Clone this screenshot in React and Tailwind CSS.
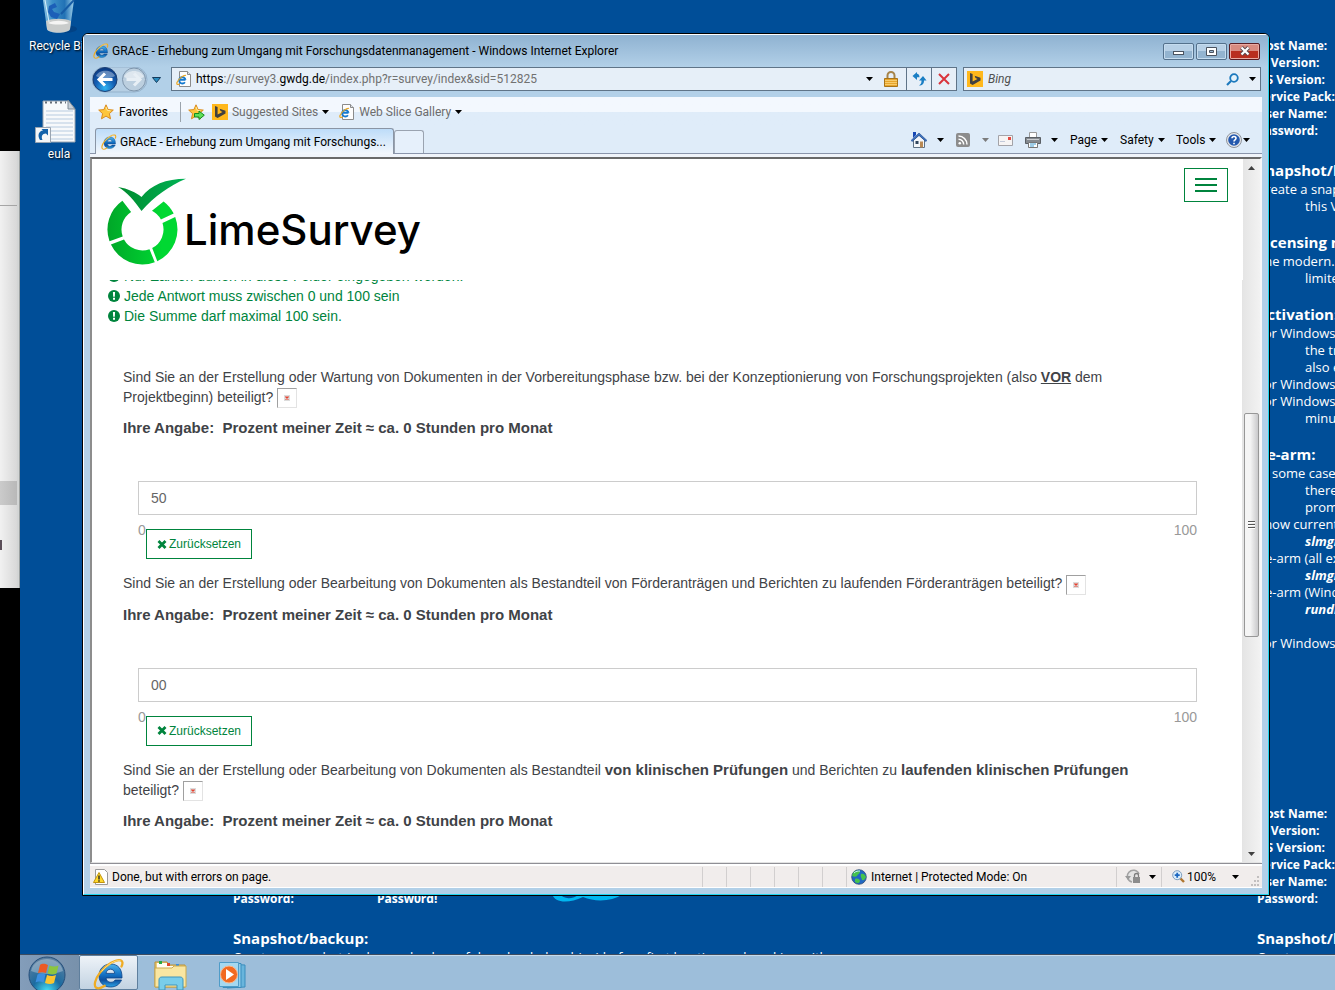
import React, { useState } from "react";

function Caret({ className = "text-black" }) {
  return (
    <svg width="7" height="4" viewBox="0 0 7 4" className={`shrink-0 ${className}`} aria-hidden="true">
      <path d="M0 0h7L3.500 4z" fill="currentColor" />
    </svg>
  );
}

function ExplorerLogo({ size = 16 }) {
  return (
    <svg width={size} height={size} viewBox="0 0 32 32" className="shrink-0" aria-hidden="true">
      <defs>
        <linearGradient id="ieBlue" x1="0" y1="0" x2="0" y2="1">
          <stop offset="0" stopColor="#4fb4ea" />
          <stop offset="0.45" stopColor="#1573c6" />
          <stop offset="0.7" stopColor="#0d4f9e" />
          <stop offset="1" stopColor="#2ba3e6" />
        </linearGradient>
      </defs>
      <path d="M29 20H13c.4 2.800 2.200 4.300 4.800 4.300 2 0 3.400-.8 4.300-2.300h6.400C26.500 26.500 22.800 29 17.600 29 10.500 29 6 24.500 6 17.800S10.700 6 17.600 6C25 6 29.300 11 29 20zM13 15.400h8.700c-.4-2.800-1.900-4.200-4.200-4.200s-4 1.400-4.500 4.200z" fill="url(#ieBlue)" stroke="#0b4387" strokeWidth="0.8" />
      <path d="M28.500 8.500c1.500-3.200 1.300-5.500-.8-6.200C23.300.8 13.500 6.500 7 14.600 1.700 21.400.6 27.800 3.200 29.800c1.900 1.300 5 .3 8.500-2" fill="none" stroke="#efac24" strokeWidth="2.300" strokeLinecap="round" />
      <path d="M27.500 2.800c-5-1.300-13 3.700-19 10.700" fill="none" stroke="#ffe28a" strokeWidth="0.900" />
    </svg>
  );
}

function PageLogo() {
  return (
    <svg width="16" height="16" viewBox="0 0 16 16" className="shrink-0" aria-hidden="true">
      <path d="M3.500.5h8l3 3v12h-11z" fill="#fdfdfd" stroke="#8b8b8b" />
      <path d="M11.500.5v3h3" fill="#dde3ea" stroke="#8b8b8b" />
      <path d="M9.500 8.800a3.200 3.200 0 1 0-.6 2.400M3.500 8.800h6" fill="none" stroke="#1479cf" strokeWidth="1.900" />
      <path d="M10 4.500C8 3.500 2.500 7.500 1 11.500c-.6 2 .5 2.500 2.500 1.500" fill="none" stroke="#e9a827" strokeWidth="1.200" />
    </svg>
  );
}

function BingLogo() {
  return (
    <svg width="16" height="16" viewBox="0 0 16 16" className="shrink-0" aria-hidden="true">
      <path d="M0 0h16v16H0z" fill="#ffb81c" />
      <path d="M3 2l2.600.9v7.600L10.500 8 8.500 7 7.600 4.700 13.500 6.800v2.800L5.600 14 3 12.500z" fill="#404040" />
    </svg>
  );
}

function Star({ add = false }) {
  return (
    <svg width="17" height="16" viewBox="0 0 17 16" className="shrink-0" aria-hidden="true">
      <path d="M8 .8l2.100 4.800 5.200.5-3.900 3.500 1.100 5.200L8 12.100l-4.500 2.700 1.100-5.200L.7 6.100l5.200-.5z" fill="#fdc63c" stroke="#d98b1e" />
      <path d="M8 3l1.300 3.400 3.200.4" fill="none" stroke="#ffeaa0" />
      {add && <path d="M6.500 9.500h4.500V7l5.300 4.200L11 15.500V13H6.500z" fill="#5fe05a" stroke="#148a1c" />}
    </svg>
  );
}

function RecycleBin() {
  return (
    <svg width="48" height="38" viewBox="0 0 48 38" aria-hidden="true">
      <defs>
        <linearGradient id="bin" x1="0" x2="1">
          <stop offset="0" stopColor="#8cc3e2" />
          <stop offset="0.3" stopColor="#3b8fc9" />
          <stop offset="0.7" stopColor="#2272b5" />
          <stop offset="1" stopColor="#9fd0ea" />
        </linearGradient>
      </defs>
      <ellipse cx="29" cy="29" rx="13" ry="4" fill="#043a78" opacity="0.6" />
      <path d="M8 0h31l-4 29c-1 5-22 5-23 0z" fill="url(#bin)" />
      <path d="M11 21c6-3 19-3 25 0l-1 8c-2 5-21 5-23 0z" fill="#c9cccb" />
      <path d="M13 23c6-3 15-3 21 0-5 2-16 2-21 0z" fill="#f5f5f4" />
      <path d="M14 6l6-3 2 4-5 2 2 3 6 2-3 5-6-2-3-5z" fill="#1c5fb8" />
      <path d="M39 0L26 14" stroke="#165ca6" strokeWidth="2" />
      <path d="M10 0l4 22" stroke="#d8f0fb" />
    </svg>
  );
}

function TextFile() {
  return (
    <svg width="48" height="47" viewBox="0 0 48 47" aria-hidden="true">
      <path d="M8 2h25l7 8v33H8z" fill="#f7f9fb" stroke="#9aa5b1" />
      <path d="M33 1v9h7z" fill="#c8d0d8" stroke="#7f8b97" />
      <path d="M10 3.500h21" stroke="#666f78" strokeWidth="2" strokeDasharray="2 3" />
      <path d="M11 12h27M11 16h27M11 20h27M11 24h27M11 28h27M11 32h27M11 36h27M11 40h27" stroke="#b7cbe0" />
      <path d="M.5 28.500h15v15H.5z" fill="#f4f6f8" stroke="#9aa5b1" />
      <path d="M5 41c-3-5-1-9 3-9.500L6.500 30H13v6.500l-2-2c-4 0-5 3-3.500 6.500z" fill="#1261a9" />
    </svg>
  );
}

const infoSheet = [
  { kind: "b", text: "Host Name:" },
  { kind: "b", text: "IE Version:" },
  { kind: "b", text: "OS Version:" },
  { kind: "b", text: "Service Pack:" },
  { kind: "b", text: "User Name:" },
  { kind: "b", text: "Password:" },
  { kind: "gap" },
  { kind: "h", text: "Snapshot/backup:" },
  { kind: "p", text: "Create a snapshot" },
  { kind: "i", text: "this VM" },
  { kind: "gap" },
  { kind: "h", text: "Licensing notes" },
  { kind: "p", text: "The modern.ie" },
  { kind: "i", text: "limited" },
  { kind: "gap" },
  { kind: "h", text: "Activation:" },
  { kind: "p", text: "For Windows 7" },
  { kind: "i", text: "the trial" },
  { kind: "i", text: "also enter" },
  { kind: "p", text: "For Windows 8" },
  { kind: "p", text: "For Windows 8" },
  { kind: "i", text: "minutes" },
  { kind: "gap" },
  { kind: "h", text: "Re-arm:" },
  { kind: "p", text: "In some cases" },
  { kind: "i", text: "there" },
  { kind: "i", text: "prompt" },
  { kind: "p", text: "Show current" },
  { kind: "c", text: "slmgr" },
  { kind: "p", text: "Re-arm (all except" },
  { kind: "c", text: "slmgr" },
  { kind: "p", text: "Re-arm (Windows" },
  { kind: "c", text: "rundll32" },
  { kind: "gap" },
  { kind: "p", text: "For Windows 8" },
];

const sheetStyles = {
  b: "h-[17px] text-[12px] leading-[17px] font-bold",
  h: "h-[21px] text-[15px] leading-[21px] font-bold",
  p: "h-[17px] text-[13px] leading-[17px]",
  i: "h-[17px] pl-12 text-[13px] leading-[17px]",
  c: "h-[17px] pl-12 text-[13px] leading-[17px] font-bold italic",
  gap: "h-[17px]",
};

function SheetRows({ rows }) {
  return rows.map((row, i) => (
    <div key={i} className={sheetStyles[row.kind]}>
      {row.text}
    </div>
  ));
}

function Wallpaper() {
  return (
    <div className="absolute inset-0 overflow-hidden font-['Open_Sans','Noto_Sans',sans-serif] whitespace-nowrap text-white">
      <div className="absolute top-[37px] right-0 bottom-0 flex w-[78px] flex-col justify-between overflow-hidden">
        <div>
          <SheetRows rows={infoSheet.slice(0, 6)} />
          <div className="h-1" />
          <SheetRows rows={infoSheet.slice(6)} />
        </div>
        <div className="-mb-3">
          <SheetRows rows={infoSheet.slice(0, 6)} />
          <div className="h-1" />
          <SheetRows rows={infoSheet.slice(6, 9)} />
        </div>
      </div>
      <div className="absolute -bottom-3 left-[213px] w-[640px]">
        <div className="flex text-[12px] leading-[17px] font-bold">
          <span className="w-36">Password:</span>
          <span>Passw0rd!</span>
        </div>
        <div className="h-[21px]" />
        <div className="text-[15px] leading-[21px] font-bold">Snapshot/backup:</div>
        <div className="text-[13px] leading-[17px]">
          Create a snapshot (or keep a backup of downloaded archive) before first booting and working with
        </div>
      </div>
      <svg width="74" height="12" viewBox="0 0 74 12" className="absolute bottom-[48px] left-[532px]" aria-hidden="true">
        <path d="M0 0c3 9 16 10 31 3 12 5 28 5 40-3z" fill="#00b7f1" />
        <path d="M8 0c3 5 12 6 20 0z" fill="#004e98" />
      </svg>
    </div>
  );
}

function TitleBar() {
  const base = "flex h-[17px] items-center justify-center rounded-[2px] border border-[#54718c] shadow-[inset_0_0_0_1px_#c5dcef]";
  return (
    <div className="flex h-8 items-center bg-gradient-to-b from-[#8fb2d1] to-[#b2d0e8] pr-2 pl-[9px] text-[12px]">
      <ExplorerLogo />
      <span className="ml-[3px] flex-1 truncate leading-4">
        GRAcE - Erhebung zum Umgang mit Forschungsdatenmanagement - Windows Internet Explorer
      </span>
      <div className="flex gap-[2px]">
        <button aria-label="Minimize" className={`${base} w-[31px] bg-gradient-to-b from-[#b7d0e6] from-50% to-[#93b4d0] to-50%`}>
          <span className="mt-1 h-1 w-[11px] border border-[#4a5360] bg-white" />
        </button>
        <button aria-label="Maximize" className={`${base} w-[31px] bg-gradient-to-b from-[#b7d0e6] from-50% to-[#93b4d0] to-50%`}>
          <svg width="11" height="9" viewBox="0 0 11 9" aria-hidden="true">
            <path d="M.5.5h10v8H.5z" fill="#fff" stroke="#4a5360" />
            <path d="M3.500 3.500h4v2h-4z" fill="#9bb8d2" stroke="#4a5360" />
          </svg>
        </button>
        <button aria-label="Close window" className="flex h-[17px] w-[31px] items-center justify-center rounded-[2px] border border-[#5a1d23] bg-gradient-to-b from-[#d98b80] from-50% to-[#b92e1f] to-50% shadow-[inset_0_0_0_1px_#e9aaa2]">
          <svg width="12" height="10" viewBox="0 0 12 10" aria-hidden="true">
            <path d="M2.500 1.500l7 7m0-7l-7 7" stroke="#5b4a50" strokeWidth="4" />
            <path d="M2.500 1.500l7 7m0-7l-7 7" stroke="#fff" strokeWidth="2.200" />
          </svg>
        </button>
      </div>
    </div>
  );
}

function AddressRow() {
  return (
    <div className="flex h-[30px] items-start pr-[7px] pl-2 text-[12px]">
      <svg width="56" height="26" viewBox="0 0 56 26" className="shrink-0" aria-hidden="true">
        <defs>
          <radialGradient id="back" cx="0.5" cy="0.85" r="0.8">
            <stop offset="0" stopColor="#32b5f3" />
            <stop offset="0.5" stopColor="#1560b4" />
            <stop offset="1" stopColor="#0c3c85" />
          </radialGradient>
        </defs>
        <rect x="0" y="0" width="55" height="25" rx="12.500" fill="#b6cfe4" stroke="#94b1cb" />
        <circle cx="13" cy="12.500" r="12" fill="url(#back)" stroke="#1b3f74" />
        <path d="M4 9c3-7 16-7 19 0-5 3-14 3-19 0z" fill="#fff" opacity="0.35" />
        <path d="M20.500 12.500H8M13 6.500l-6 6 6 6" fill="none" stroke="#fff" strokeWidth="3" />
        <circle cx="42" cy="12.500" r="11.500" fill="#bccfdf" stroke="#7e95ac" />
        <path d="M32 10c3-8 17-8 20 0-6 3-14 3-20 0z" fill="#fff" opacity="0.5" />
        <path d="M34.500 12.500h13M42 6.500l6 6-6 6" fill="none" stroke="#e8eff5" strokeWidth="3" />
      </svg>
      <button aria-label="Recent pages" className="mt-[10px] ml-1 shrink-0">
        <svg width="9" height="6" viewBox="0 0 9 6" aria-hidden="true">
          <path d="M.5.5h8l-4 5z" fill="#2a8dc0" stroke="#153b5d" />
        </svg>
      </button>
      <div className="ml-[10px] flex h-6 min-w-0 flex-1 items-center border border-[#5f7488] bg-[#e6eff8]">
        <div className="ml-1"><PageLogo /></div>
        <div className="relative ml-1 flex h-full min-w-0 flex-1 items-center text-[#717171]">
          <input className="absolute inset-0 w-full bg-transparent outline-none" aria-label="Address" />
          <span className="pointer-events-none truncate">
            <span className="text-black">https</span>://survey3.<span className="text-black">gwdg.de</span>/index.php?r=survey/index&amp;sid=512825
          </span>
        </div>
        <button aria-label="Address history" className="flex w-[18px] items-center"><Caret /></button>
        <svg width="14" height="16" viewBox="0 0 14 16" className="mr-2 shrink-0" aria-hidden="true">
          <path d="M3.500 8V4.500a3.500 3.500 0 0 1 7 0V8" fill="none" stroke="#a6844a" strokeWidth="2" />
          <path d="M.5 7.500h13v8H.5z" fill="#e8a52b" stroke="#a8741a" />
          <path d="M1 9.500h12M1 11.500h12M1 13.500h12" stroke="#f7cc6d" />
        </svg>
        <button aria-label="Refresh" className="flex h-full w-[25px] items-center justify-center border-l border-[#5f7488]">
          <svg width="15" height="14" viewBox="0 0 15 14" aria-hidden="true">
            <path d="M5 0L.5 4 5 8V5.200h2.500C7.500 3 6.500 1.800 5 1.800z" fill="#1b7fc4" />
            <path d="M7 8.500h2.500c0 2.500-.5 3.500-2.500 5 3.500 0 5-1.500 5-5h2.500L11 4z" fill="#1b7fc4" />
          </svg>
        </button>
        <button aria-label="Stop" className="flex h-full w-[25px] items-center justify-center border-l border-[#5f7488]">
          <svg width="12" height="12" viewBox="0 0 12 12" aria-hidden="true">
            <path d="M1 1l10 10M11 1L1 11" stroke="#d9343c" strokeWidth="2" />
          </svg>
        </button>
      </div>
      <div className="ml-[6px] flex h-6 w-[298px] items-center border border-[#5f7488] bg-[#e6eff8] pl-[3px]">
        <BingLogo />
        <input aria-label="Search with Bing" placeholder="Bing" className="ml-[5px] min-w-0 flex-1 bg-transparent italic outline-none placeholder:text-[#4f4f4f]" />
        <button aria-label="Search" className="mr-[10px]">
          <svg width="13" height="13" viewBox="0 0 13 13" aria-hidden="true">
            <circle cx="8" cy="5" r="3.800" fill="#e4f2fb" stroke="#1c79bd" strokeWidth="1.800" />
            <path d="M5 8l-4 4" stroke="#1c79bd" strokeWidth="2.200" />
          </svg>
        </button>
        <button aria-label="Search options" className="mr-1"><Caret /></button>
      </div>
    </div>
  );
}

function FavoritesBar() {
  return (
    <div className="flex h-[30px] items-center bg-gradient-to-b from-[#f3f8fe] from-50% to-[#dfecf9] to-50% pl-2 text-[12px]">
      <button className="flex items-center gap-1"><Star />Favorites</button>
      <span className="mr-[7px] ml-3 h-5 w-px bg-[#9aa3ac]" />
      <button aria-label="Add to Favorites bar"><Star add /></button>
      <button className="ml-[7px] flex items-center gap-1 text-[#6d6d6d]"><BingLogo />Suggested Sites<Caret /></button>
      <button className="ml-[10px] flex items-center gap-1 text-[#6d6d6d]"><PageLogo />Web Slice Gallery<Caret /></button>
    </div>
  );
}

function CommandBar() {
  return (
    <div className="flex items-center pr-3 text-[12px]">
      <button aria-label="Home" className="flex w-[45px] items-center gap-[10px]">
        <svg width="16" height="16" viewBox="0 0 16 16" aria-hidden="true">
          <path d="M2.500 8v7.500h11V8L8 3z" fill="#f4f7fa" stroke="#5e7184" />
          <path d="M0 8.500L8 1l8 7.500-1 1L8 3.500 1 9.500z" fill="#3f74bf" stroke="#1d448c" strokeWidth="0.6" />
          <path d="M2 0h3v3L2 6z" fill="#1647b4" />
          <path d="M9 9.500h3v6H9z" fill="#b98a55" /><path d="M4.500 9h3v3h-3z" fill="#32475e" />
        </svg>
        <Caret />
      </button>
      <button aria-label="Feeds" className="flex w-[42px] items-center gap-3">
        <svg width="14" height="14" viewBox="0 0 14 14" aria-hidden="true">
          <rect width="14" height="14" rx="2" fill="#8c8c8c" />
          <circle cx="3.800" cy="10.200" r="1.300" fill="#fff" />
          <path d="M2.500 6.300a5.200 5.200 0 0 1 5.200 5.200M2.500 3a8.500 8.500 0 0 1 8.500 8.500" fill="none" stroke="#fff" strokeWidth="1.500" />
        </svg>
        <Caret className="text-[#7c7c7c]" />
      </button>
      <button aria-label="Read mail" className="w-[27px]">
        <svg width="15" height="11" viewBox="0 0 15 11" aria-hidden="true">
          <path d="M.5.5h14v10H.5z" fill="#f6f4f4" stroke="#a3a3a8" />
          <path d="M10 2h3v3h-3z" fill="#e44b43" /><path d="M2 6.500h5" stroke="#c2cada" />
        </svg>
      </button>
      <button aria-label="Print" className="flex w-[45px] items-center gap-[10px]">
        <svg width="16" height="16" viewBox="0 0 16 16" aria-hidden="true">
          <path d="M4.500.5h7v5h-7z" fill="#fff" stroke="#999" />
          <path d="M.5 5.500h15v6H.5z" fill="#858a90" stroke="#5b6066" />
          <path d="M2 7.500h12" stroke="#c9cdd1" />
          <path d="M3.500 10.500h9v5h-9z" fill="#fff" stroke="#777" /><path d="M5 12h6M5 14h4" stroke="#3f9bd0" />
        </svg>
        <Caret />
      </button>
      <button className="flex w-[50px] items-center gap-1">Page<Caret /></button>
      <button className="flex w-14 items-center gap-1">Safety<Caret /></button>
      <button className="flex w-[50px] items-center gap-1">Tools<Caret /></button>
      <button aria-label="Help" className="flex w-6 items-center gap-px">
        <svg width="16" height="16" viewBox="0 0 16 16" aria-hidden="true">
          <circle cx="8" cy="8" r="7.500" fill="#e4e6ea" stroke="#8f949c" />
          <circle cx="8" cy="8" r="5.800" fill="#2459ae" />
          <path d="M6 6.300c0-2.500 4-2.500 4 0 0 1.500-2 1.500-2 3.200M8 10.800v1.500" fill="none" stroke="#fff" strokeWidth="1.600" />
        </svg>
        <Caret />
      </button>
    </div>
  );
}

function TabRow() {
  return (
    <div className="flex h-[27px] items-stretch border-b border-[#8a95ab] bg-[#dfecf9] pl-[5px] text-[12px]">
      <button className="mt-px -mb-px flex w-[299px] items-center gap-[3px] rounded-t-[3px] border border-b-0 border-[#8a95a5] bg-gradient-to-b from-[#bddcf9] to-[#f3f7fc] pl-[5px]">
        <ExplorerLogo />
        <span className="truncate leading-4">GRAcE - Erhebung zum Umgang mit Forschungs...</span>
      </button>
      <button aria-label="New tab" className="mt-[3px] w-[30px] rounded-t-[3px] border border-b-0 border-[#9aa3b0] bg-[#e6f0fb]" />
      <div className="flex-1" />
      <CommandBar />
    </div>
  );
}

function LimeLogo() {
  return (
    <a href="#start" className="flex items-center text-black no-underline">
      <svg width="80" height="88" viewBox="0 0 80 88" aria-hidden="true">
        <defs>
          <linearGradient id="lime" gradientUnits="userSpaceOnUse" x1="1" y1="0" x2="70" y2="0">
            <stop offset="0" stopColor="#00a628" />
            <stop offset="0.8" stopColor="#00d832" />
          </linearGradient>
          <linearGradient id="tick" x1="0" x2="1">
            <stop offset="0" stopColor="#008a2e" />
            <stop offset="1" stopColor="#00b355" />
          </linearGradient>
        </defs>
        <g fill="url(#lime)">
          <path d="M16.400 22.800A35 35 0 0 0 3.500 63.200L16.700 58.500A21 21 0 0 1 25.100 33.900Z" />
          <path d="M4.900 66.600A35 35 0 0 0 48.800 84.300L43.500 71.300A21 21 0 0 1 18 61.500Z" />
          <path d="M51.300 83.200A35 35 0 0 0 69.200 39L56.500 45A21 21 0 0 1 46.200 70.100Z" />
          <path d="M67.700 35.600A35 35 0 0 0 57.600 23.500L46 32.800A21 21 0 0 1 54.900 41.500Z" />
        </g>
        <path d="M12 9C22 10.500 30 14.500 35.500 19 45 7 60 .8 80 .8 63 8 49 18 35.500 33 29 23.500 21 14 12 9Z" fill="url(#tick)" />
      </svg>
      <span className="-ml-[2px] pt-[15px] font-['Inter',sans-serif] text-[42px] leading-[56px] font-medium">LimeSurvey</span>
    </a>
  );
}

function Hint({ children }) {
  return (
    <li className="flex h-5 items-center gap-1">
      <svg width="12" height="12" viewBox="0 0 12 12" className="shrink-0" aria-hidden="true">
        <circle cx="6" cy="6" r="6" fill="#00843d" />
        <path d="M4.900 2h2.200l-.3 4.800H5.200zM5 7.800h2v2H5z" fill="#fff" />
      </svg>
      {children}
    </li>
  );
}

function BrokenImage() {
  return (
    <span role="img" aria-label="Missing picture" className="inline-flex h-5 w-5 items-center justify-center border border-t-[#a0a0a0] border-r-[#e3e3e3] border-b-[#e3e3e3] border-l-[#a0a0a0] align-middle">
      <svg width="6" height="6" viewBox="0 0 6 6" aria-hidden="true">
        <path d="M0 0h6v6H0z" fill="#dcdcdc" />
        <path d="M1.500 1.500l3 3m0-3l-3 3" stroke="#e8412e" strokeWidth="1.400" />
      </svg>
    </span>
  );
}

function Question({ id, initial, children }) {
  const [value, setValue] = useState(initial);
  return (
    <section>
      <label htmlFor={id} className="block">
        <span className="block">{children}</span>
        <span className="mt-[10px] block text-[15px] font-bold">
          Ihre Angabe:&nbsp; Prozent meiner Zeit ≈ ca. 0 Stunden pro Monat
        </span>
      </label>
      <div className="mt-[43px] px-[15px]">
        <input
          id={id}
          value={value}
          onChange={(e) => setValue(e.target.value)}
          className="block h-[34px] w-full border border-[#cccccc] bg-white px-3 text-[14px] text-[#666666] outline-none focus:border-[#00843d]"
        />
        <div className="mt-[5px] flex h-[9px] justify-between leading-5 text-[#999999]">
          <span>0</span>
          <span>100</span>
        </div>
        <button
          type="button"
          onClick={() => setValue("")}
          className="relative ml-2 flex h-[30px] items-center gap-[2px] border border-[#00843d] bg-white px-[10px] text-[12px] text-[#00843d]"
        >
          <svg width="10" height="9" viewBox="0 0 10 9" aria-hidden="true">
            <path d="M1.500 1l7 7m0-7l-7 7" stroke="currentColor" strokeWidth="2.800" />
          </svg>
          Zurücksetzen
        </button>
      </div>
    </section>
  );
}

function SurveyPage() {
  return (
    <main className="flex min-w-0 flex-1 flex-col overflow-hidden bg-white font-['Liberation_Sans',Arial,sans-serif] text-[14px] leading-5 text-[#3f4347]">
      <header className="relative z-10 flex h-[121px] shrink-0 items-start justify-between bg-white pt-[9px] pr-[15px] pl-[14px]">
        <div className="pt-[10px]"><LimeLogo /></div>
        <button aria-label="Menu" className="flex h-[34px] w-11 flex-col items-center justify-center gap-1 border border-[#00843d]">
          <span className="h-[2px] w-[22px] bg-[#00843d]" />
          <span className="h-[2px] w-[22px] bg-[#00843d]" />
          <span className="h-[2px] w-[22px] bg-[#00843d]" />
        </button>
      </header>
      <div className="min-h-0 flex-1 overflow-hidden border-r border-[#e4e4e4]">
        <ul className="-mt-[14px] pl-4 text-[#00843d]">
          <Hint>Nur Zahlen dürfen in diese Felder eingegeben werden.</Hint>
          <Hint>Jede Antwort muss zwischen 0 und 100 sein</Hint>
          <Hint>Die Summe darf maximal 100 sein.</Hint>
        </ul>
        <form className="flex flex-col gap-[14px] pt-[41px] pr-[30px] pl-[31px]">
          <Question id="preparation" initial="50">
            Sind Sie an der Erstellung oder Wartung von Dokumenten in der Vorbereitungsphase bzw. bei der Konzeptionierung von Forschungsprojekten (also{" "}
            <b className="underline">VOR</b> dem{" "}
            <span className="whitespace-nowrap">Projektbeginn) beteiligt? <BrokenImage /></span>
          </Question>
          <Question id="proposals" initial="00">
            Sind Sie an der Erstellung oder Bearbeitung von Dokumenten als Bestandteil von Förderanträgen und Berichten zu laufenden Förderanträgen beteiligt?{" "}
            <BrokenImage />
          </Question>
          <Question id="trials" initial="">
            Sind Sie an der Erstellung oder Bearbeitung von Dokumenten als Bestandteil{" "}
            <b className="text-[15px]">von klinischen Prüfungen</b> und Berichten zu{" "}
            <b className="text-[15px]">laufenden klinischen Prüfungen</b>
            <br />
            beteiligt? <BrokenImage />
          </Question>
        </form>
      </div>
    </main>
  );
}

function ScrollBar() {
  return (
    <div className="flex w-[17px] shrink-0 flex-col items-center bg-gradient-to-r from-[#e5e5e5] to-[#f2f2f2]">
      <button aria-label="Scroll up" className="flex h-[17px] w-full items-center justify-center">
        <svg width="7" height="4" viewBox="0 0 7 4" aria-hidden="true"><path d="M0 4h7L3.500 0z" fill="#404040" /></svg>
      </button>
      <div className="flex w-full flex-1 flex-col items-center">
        <div className="flex-[238]" />
        <div className="flex w-[15px] flex-[223] flex-col items-center justify-center gap-px rounded-[2px] border border-[#979797] bg-gradient-to-r from-[#f5f5f5] from-40% to-[#c9c9cb]">
          <span className="h-[2px] w-[7px] border-t border-[#555] bg-white" />
          <span className="h-[2px] w-[7px] border-t border-[#555] bg-white" />
          <span className="h-[2px] w-[7px] border-t border-[#555] bg-white" />
        </div>
        <div className="flex-[209]" />
      </div>
      <button aria-label="Scroll down" className="flex h-[17px] w-full items-center justify-center">
        <Caret className="text-[#404040]" />
      </button>
    </div>
  );
}

function StatusBar() {
  const cell = "h-5 border-l border-[#d2cfcf]";
  return (
    <footer className="flex h-[22px] items-center border-b border-white bg-[#f1edec] text-[12px]">
      <div className="flex min-w-0 flex-1 items-center gap-[3px] pl-[3px]">
        <svg width="16" height="16" viewBox="0 0 16 16" className="shrink-0" aria-hidden="true">
          <path d="M2.500.5h9l3 3v12h-12z" fill="#fff" stroke="#9a9a9a" />
          <path d="M6 3.500l5.500 10H.5z" fill="#ffd92e" stroke="#c29410" />
          <path d="M6 6.500v4M6 11.300v1.400" stroke="#222" strokeWidth="1.400" />
        </svg>
        <span className="truncate">Done, but with errors on page.</span>
      </div>
      {[0, 1, 2, 3, 4, 5].map((n) => (
        <span key={n} className={`${cell} w-6`} />
      ))}
      <div className={`${cell} flex w-[270px] items-center gap-1 pl-1`}>
        <svg width="16" height="16" viewBox="0 0 16 16" className="shrink-0" aria-hidden="true">
          <circle cx="8" cy="8" r="7.300" fill="#2066c4" stroke="#2f4f74" strokeWidth="0.800" />
          <path d="M2 4c2-3 5-3 7-2 0 3-2 3-3 5-1 1-3 1-5 0zM10 5c3-1 4 1 5 3-1 2-2 4-4 3 0-2-2-3-1-6zM4 10c2-1 5 0 5 2-1 3-3 2-5 1z" fill="#45c34c" />
          <path d="M3 4c2-2 4-2 6-2" stroke="#c8f0ff" fill="none" />
        </svg>
        Internet | Protected Mode: On
      </div>
      <button aria-label="Privacy settings" className={`${cell} flex w-[45px] items-center gap-2 pl-2`}>
        <svg width="16" height="15" viewBox="0 0 16 15" className="shrink-0" aria-hidden="true">
          <path d="M14 5A6 6 0 1 0 7 13" fill="#e3e3e3" stroke="#a2a2a2" strokeWidth="1.500" />
          <path d="M0 7h6L3 11z" fill="#9a9a9a" />
          <path d="M9.500 8V6.500a2 2 0 0 1 4 0V8" fill="none" stroke="#7d7d7d" strokeWidth="1.300" />
          <path d="M8 8h7v6H8z" fill="#8c8c8c" />
        </svg>
        <Caret />
      </button>
      <div className={`${cell} flex w-[101px] items-center pl-[10px]`}>
        <button className="flex items-center gap-[2px]">
          <svg width="13" height="13" viewBox="0 0 13 13" aria-hidden="true">
            <path d="M8 8l4 4" stroke="#b0762f" strokeWidth="2.400" />
            <circle cx="5.200" cy="5.200" r="4.500" fill="#dceefb" stroke="#7d9dbd" />
            <path d="M5.200 2.700v5M2.700 5.200h5" stroke="#1b66c0" strokeWidth="1.800" />
          </svg>
          100%
        </button>
        <button aria-label="Zoom levels" className="ml-4"><Caret /></button>
        <svg width="10" height="10" viewBox="0 0 10 10" className="mt-2 mr-[2px] ml-auto" aria-hidden="true">
          <path d="M7 0h2v2H7zM4 4h2v2H4zM7 4h2v2H7zM1 8h2v2H1zM4 8h2v2H4zM7 8h2v2H7z" fill="#c2bfbf" />
        </svg>
      </div>
    </footer>
  );
}

function BrowserWindow() {
  return (
    <div className="absolute top-[33px] right-[65px] bottom-[58px] left-[62px] flex flex-col overflow-hidden rounded-t-[6px] border border-black bg-[#b2d0e8]">
      <div className="flex min-h-0 flex-1 flex-col border-t border-r border-b border-l border-t-white border-r-[#23d5f0] border-b-[#23d5f0] border-l-white">
        <TitleBar />
        <AddressRow />
        <div className="mx-[6px] mb-[6px] flex min-h-0 flex-1 flex-col">
          <FavoritesBar />
          <TabRow />
          <div className="h-[3px] bg-[#f0f4fa]" />
          <div className="flex min-h-0 flex-1 border-t-2 border-r-2 border-b border-l-2 border-t-[#696969] border-r-[#f7f7f7] border-b-[#e3e3e3] border-l-[#8d8d8d]">
            <SurveyPage />
            <ScrollBar />
          </div>
          <div className="h-[3px] border-t border-[#8f8f95] bg-white" />
          <StatusBar />
        </div>
      </div>
    </div>
  );
}

function TaskBar() {
  return (
    <nav className="flex h-9 shrink-0 overflow-hidden border-t border-[#3d4c60] bg-[#9dbeda] shadow-[inset_0_1px_0_#c6dbec]">
      <button aria-label="Start" className="flex w-[59px] items-start bg-gradient-to-r from-[#839dba] to-[#7891ab] pt-px pl-2">
        <svg width="38" height="38" viewBox="0 0 38 38" aria-hidden="true">
          <defs>
            <radialGradient id="orb" cx="0.5" cy="0.95" r="0.9">
              <stop offset="0" stopColor="#45e1f8" />
              <stop offset="0.45" stopColor="#1c6ba0" />
              <stop offset="1" stopColor="#5c7f9f" />
            </radialGradient>
          </defs>
          <circle cx="19" cy="19" r="18" fill="url(#orb)" stroke="#264f7b" />
          <path d="M3 15C6-1 32-1 35 15c-9 4-23 4-32 0z" fill="#fff" opacity="0.3" />
          <path d="M12 9c3-2 5-1 8 0l-2 8c-3-1-5-1-8 0z" fill="#ec5a24" />
          <path d="M21.500 9.500c3 1 5 1.500 9 0l-2 8c-3 1.500-6 1-9 0z" fill="#8cc63e" />
          <path d="M9.500 18.500c3-1.500 5-1 8 0l-2 8c-3-1-5-1.500-8 0z" fill="#3c8fe0" />
          <path d="M19 19c3 1 5 1.500 9 0l-2 8c-3 1.500-6 1-9 0z" fill="#fbc52f" />
        </svg>
      </button>
      <button aria-label="Internet Explorer" className="flex w-[59px] justify-center rounded-[2px] border border-[#5f7f9d] bg-gradient-to-b from-[#eef3f8] to-[#c3d3e2] pt-[2px]">
        <ExplorerLogo size={32} />
      </button>
      <button aria-label="Windows Explorer" className="mt-[5px] ml-4 self-start">
        <svg width="33" height="30" viewBox="0 0 33 30" aria-hidden="true">
          <path d="M1 2h12l2 3h16v22H1z" fill="#eccd78" stroke="#b99238" />
          <path d="M3 3h12l1 3h14v3H3z" fill="#fffdf4" />
          <path d="M5 1h3v3H5z" fill="#28a745" /><path d="M13 3h3v3h-3z" fill="#e0452c" /><path d="M22 4h3v3h-3z" fill="#3b8ede" />
          <path d="M1 8h17l2-2h12v21H1z" fill="#f9e6a2" stroke="#cba94f" />
          <path d="M5 30V20c0-2 1-3 3-3h18c2 0 3 1 3 3v10h-6v-5H11v5z" fill="#79cdea" stroke="#3f95bd" />
        </svg>
      </button>
      <button aria-label="Media Player" className="mt-[7px] ml-8 self-start">
        <svg width="29" height="27" viewBox="0 0 29 27" aria-hidden="true">
          <path d="M8 2l18 1v22l-18 1z" fill="#69b5dc" stroke="#3b8dbd" />
          <path d="M4 1.500h18v24H4z" fill="#8fcdec" stroke="#3b8dbd" />
          <path d="M.5.500h19v24H.5z" fill="#a5d8f0" stroke="#4f9cc8" />
          <circle cx="10" cy="12.500" r="8.500" fill="#f26a21" stroke="#fbb78d" />
          <path d="M7 7l8 5.500-8 5.500z" fill="#fff" />
        </svg>
      </button>
    </nav>
  );
}

function HostEdge() {
  return (
    <div className="flex w-5 shrink-0 flex-col bg-black pt-[151px]">
      <div className="flex h-[437px]">
        <div className="flex w-[17px] flex-col bg-gradient-to-r from-[#f1f1f1] to-[#d8d8d8]">
          <div className="h-[55px] border-b border-[#a5a5a5]" />
          <div className="mt-[275px] h-6 bg-gradient-to-r from-[#cbcbcb] to-[#b8b8b8]" />
          <div className="mt-[35px] h-[10px] w-[2px] bg-[#5a4e58]" />
        </div>
        <div className="w-[3px] border-r border-[#9a9f9f] bg-[#d3d5d5]" />
      </div>
    </div>
  );
}

export default function App() {
  return (
    <div className="flex h-screen w-full overflow-hidden font-['Roboto',sans-serif] text-black">
      <HostEdge />
      <div className="flex min-w-0 flex-1 flex-col bg-[#004e98]">
        <div className="relative min-h-0 flex-1 overflow-hidden">
          <Wallpaper />
          <a href="#recycle-bin" className="absolute top-0 left-[9px] flex flex-col items-start text-[12px] leading-4 whitespace-nowrap text-white [text-shadow:1px_1px_2px_#000]">
            <span className="pl-[6px]"><RecycleBin /></span>
            <span>Recycle Bin</span>
          </a>
          <a href="#eula" className="absolute top-[99px] left-[15px] flex w-12 flex-col items-center text-[12px] leading-4 text-white [text-shadow:1px_1px_2px_#000]">
            <TextFile />
            <span>eula</span>
          </a>
          <BrowserWindow />
        </div>
        <TaskBar />
      </div>
    </div>
  );
}
